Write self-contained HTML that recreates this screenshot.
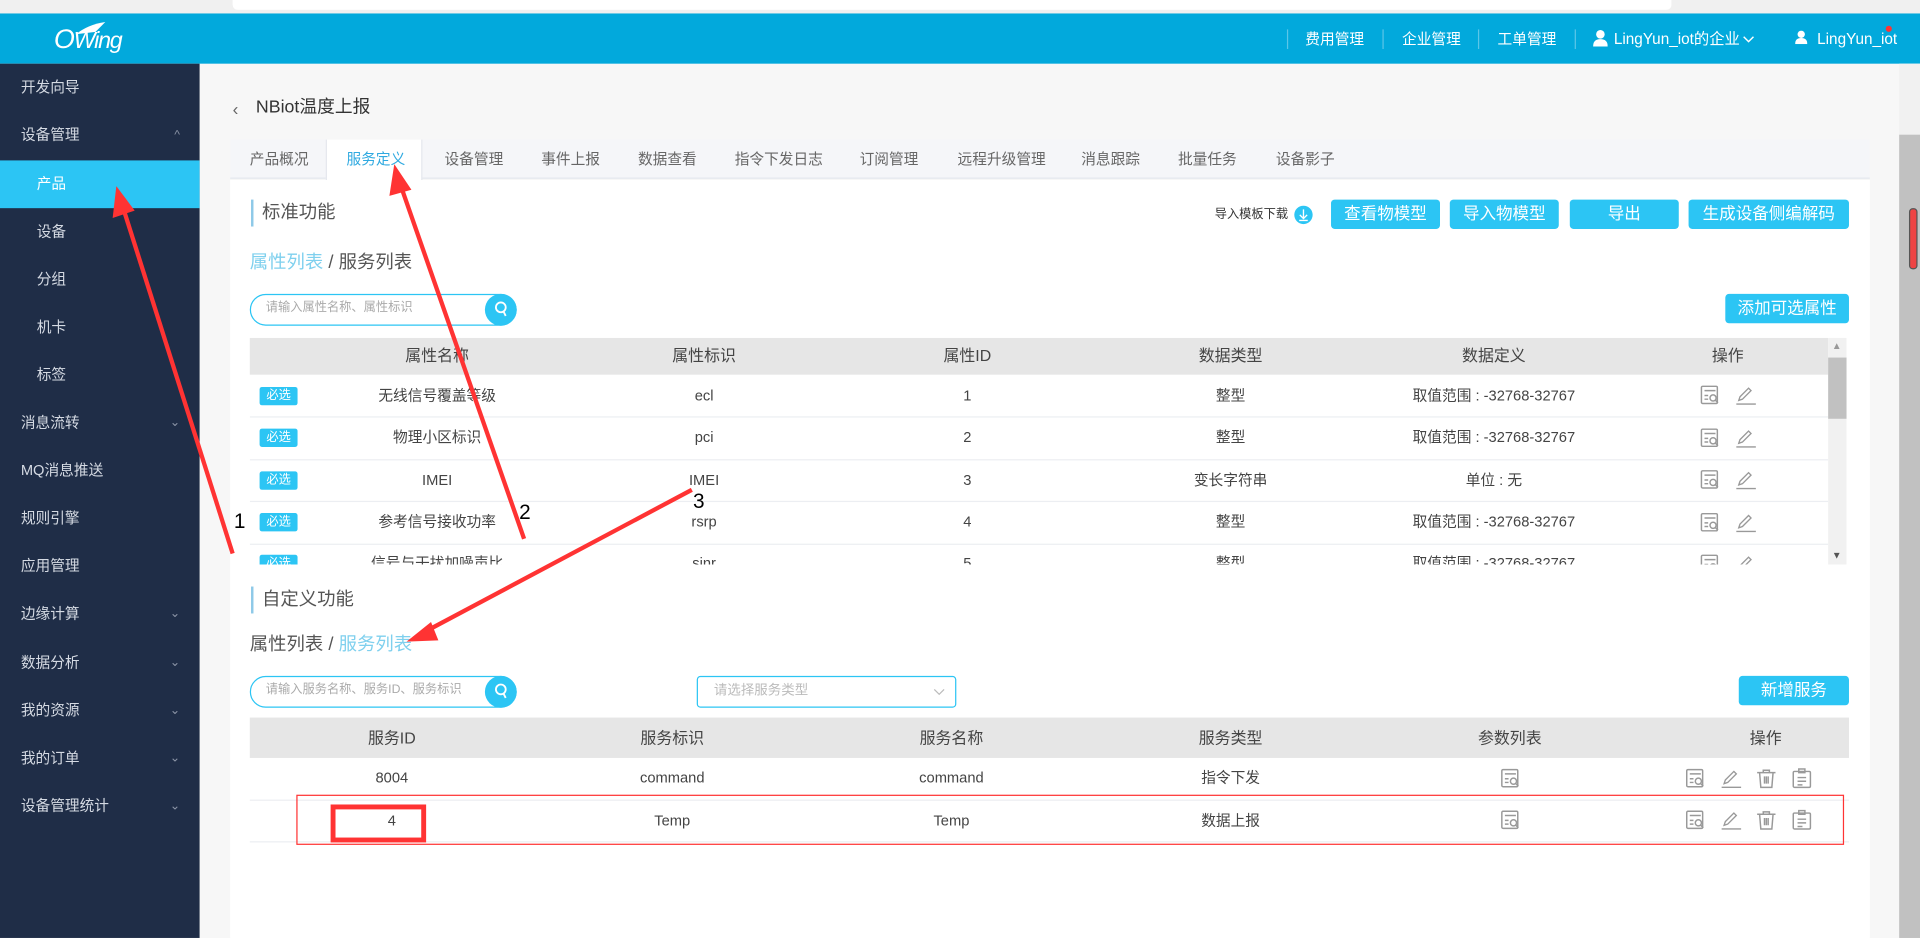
<!DOCTYPE html>
<html><head><meta charset="utf-8"><style>
*{margin:0;padding:0;box-sizing:border-box}
html,body{width:1920px;height:938px;overflow:hidden;background:#f7f7f7}
#w{position:absolute;left:0;top:0;width:1568px;height:766px;transform:scale(1.22449);transform-origin:0 0;font-family:"Liberation Sans","Noto Sans CJK SC",sans-serif;color:#333;font-size:12px;line-height:1.2}
.a{position:absolute}
.side div.it{position:absolute;left:0;width:163px;height:39px;line-height:39px;color:#d5dae3;font-size:12px;padding-left:17px}
.side div.sub{padding-left:30px}
.chev{position:absolute;right:16px;top:0;color:#8a93a5;font-size:10px}
.tab{position:absolute;top:114px;height:32px;line-height:32px;color:#666;font-size:12px}
.btn{position:absolute;background:#2cc5f4;color:#fff;border-radius:3px;text-align:center;font-size:13.5px;line-height:24px;height:24px}
.th{position:absolute;background:#e6e6e6}
.c{position:absolute;text-align:center;transform:translateX(-50%);white-space:nowrap;font-size:12px;color:#444;line-height:15px}
.row{position:absolute;left:204px;height:1px;background:#eceef2}
.badge{position:absolute;left:212px;width:31px;height:15px;background:#2cc5f4;color:#fff;border-radius:2px;font-size:10px;text-align:center;line-height:15px}
svg.ic{position:absolute;width:17px;height:17px}
</style></head><body><div id="w">
<div class="a" style="left:0;top:0;width:1568px;height:11px;background:#f0f0f0"></div>
<div class="a" style="left:190px;top:0;width:1175px;height:8px;background:#fff;border-radius:0 0 4px 4px"></div>
<div class="a" style="left:0;top:11px;width:1568px;height:41px;background:#02a9dc"></div>
<div class="a" style="left:44px;top:19px;color:#fff;font-size:22px;font-style:italic;letter-spacing:-1px">O<span style="font-size:19px">Wing</span></div>
<svg class="a" style="left:60px;top:16px" width="28" height="16"><path d="M2 12 Q12 4 26 2 L18 10 Z" fill="#fff"/></svg>
<div class="a" style="left:1051px;top:24px;width:1px;height:16px;background:#5cc6e8"></div>
<div class="a" style="left:1066px;top:25px;color:#fff;font-size:12px">费用管理</div>
<div class="a" style="left:1129px;top:24px;width:1px;height:16px;background:#5cc6e8"></div>
<div class="a" style="left:1145px;top:25px;color:#fff;font-size:12px">企业管理</div>
<div class="a" style="left:1207px;top:24px;width:1px;height:16px;background:#5cc6e8"></div>
<div class="a" style="left:1223px;top:25px;color:#fff;font-size:12px">工单管理</div>
<div class="a" style="left:1286px;top:24px;width:1px;height:16px;background:#5cc6e8"></div>
<svg class="a" style="left:1301px;top:24px" width="12" height="14"><circle cx="6" cy="4" r="3.5" fill="#fff"/><path d="M0 14 Q0 8 6 8 Q12 8 12 14Z" fill="#fff"/></svg>
<div class="a" style="left:1318px;top:25px;color:#fff;font-size:12.5px">LingYun_iot的企业</div>
<svg class="a" style="left:1423px;top:29px" width="10" height="7"><path d="M1 1l4 4 4-4" fill="none" stroke="#fff" stroke-width="1.2"/></svg>
<svg class="a" style="left:1466px;top:25px" width="10" height="11"><circle cx="5" cy="3" r="3" fill="#fff"/><path d="M0 11 Q0 6 5 6 Q10 6 10 11Z" fill="#fff"/></svg>
<div class="a" style="left:1484px;top:25px;color:#fff;font-size:12.5px">LingYun_iot</div>
<div class="a" style="left:1540px;top:21px;width:5px;height:5px;border-radius:50%;background:#f33"></div>

<div class="a side" style="left:0;top:52px;width:163px;height:714px;background:#1f2d47">
<div class="it" style="top:0">开发向导</div>
<div class="it" style="top:39px">设备管理<span class="chev">^</span></div>
<div class="it sub" style="top:79px;background:#2cc5f4;color:#fff">产品</div>
<div class="it sub" style="top:118px">设备</div>
<div class="it sub" style="top:157px">分组</div>
<div class="it sub" style="top:196px">机卡</div>
<div class="it sub" style="top:235px">标签</div>
<div class="it" style="top:274px">消息流转<span class="chev">&#8964;</span></div>
<div class="it" style="top:313px">MQ消息推送</div>
<div class="it" style="top:352px">规则引擎</div>
<div class="it" style="top:391px">应用管理</div>
<div class="it" style="top:430px">边缘计算<span class="chev">&#8964;</span></div>
<div class="it" style="top:470px">数据分析<span class="chev">&#8964;</span></div>
<div class="it" style="top:509px">我的资源<span class="chev">&#8964;</span></div>
<div class="it" style="top:548px">我的订单<span class="chev">&#8964;</span></div>
<div class="it" style="top:587px">设备管理统计<span class="chev">&#8964;</span></div>
</div>

<div class="a" style="left:1551px;top:52px;width:17px;height:714px;background:#f1f1f1"></div>
<div class="a" style="left:1551px;top:110px;width:17px;height:656px;background:#c1c1c1"></div>
<div class="a" style="left:1559px;top:170px;width:7px;height:50px;border:1px solid #555;border-radius:3px;background:#e44"></div>

<div class="a" style="left:190px;top:81px;font-size:14px;color:#666">&lsaquo;</div>
<div class="a" style="left:209px;top:80px;font-size:14.5px;color:#333">NBiot温度上报</div>

<div class="a" style="left:188px;top:114px;width:1339px;height:32px;background:#f5f6f9;border-bottom:1px solid #e4e7ed"></div>
<div class="a" style="left:266px;top:114px;width:79px;height:33px;background:#fff;border-left:1px solid #e4e7ed;border-right:1px solid #e4e7ed"></div>
<div class="tab" style="left:204px">产品概况</div>
<div class="tab" style="left:283px;color:#2fa9e0">服务定义</div>
<div class="tab" style="left:363px">设备管理</div>
<div class="tab" style="left:442px">事件上报</div>
<div class="tab" style="left:521px">数据查看</div>
<div class="tab" style="left:600px">指令下发日志</div>
<div class="tab" style="left:702px">订阅管理</div>
<div class="tab" style="left:782px">远程升级管理</div>
<div class="tab" style="left:883px">消息跟踪</div>
<div class="tab" style="left:962px">批量任务</div>
<div class="tab" style="left:1042px">设备影子</div>

<div class="a" style="left:188px;top:147px;width:1339px;height:619px;background:#fff"></div>
<div class="a" style="left:205px;top:163px;width:2px;height:22px;background:#8ec9e8"></div>
<div class="a" style="left:214px;top:165px;font-size:15px;color:#555">标准功能</div>
<div class="a" style="left:992px;top:170px;font-size:10px;color:#333">导入模板下载</div>
<div class="a" style="left:1057px;top:168px;width:15px;height:15px;border-radius:50%;background:#2cc5f4"></div>
<svg class="a" style="left:1057px;top:168px" width="15" height="15"><path d="M7.5 3v7M4.5 7.5l3 3 3-3M4 12h7" fill="none" stroke="#fff" stroke-width="1.1"/></svg>
<div class="btn" style="left:1087px;top:163px;width:89px">查看物模型</div>
<div class="btn" style="left:1184px;top:163px;width:89px">导入物模型</div>
<div class="btn" style="left:1282px;top:163px;width:89px">导出</div>
<div class="btn" style="left:1379px;top:163px;width:131px">生成设备侧编解码</div>

<div class="a" style="left:204px;top:206px;font-size:15px;color:#555"><span style="color:#7fd0ee">属性列表</span> / 服务列表</div>
<div class="a" style="left:204px;top:240px;width:218px;height:26px;border:1px solid #2cc5f4;border-radius:13px"></div>
<div class="a" style="left:217px;top:246px;font-size:10px;color:#aaa">请输入属性名称、属性标识</div>
<div class="a" style="left:396px;top:240px;width:26px;height:26px;border-radius:50%;background:#2cc5f4"></div>
<svg class="a" style="left:402px;top:245px" width="14" height="16"><circle cx="7" cy="6" r="4" fill="none" stroke="#fff" stroke-width="1.5"/><path d="M9 9 L11 13" stroke="#fff" stroke-width="1.5"/></svg>
<div class="btn" style="left:1409px;top:240px;width:101px">添加可选属性</div>

<div class="th" style="left:204px;top:276px;width:1289px;height:30px"></div>
<div class="c" style="left:357px;top:283px;font-size:13px">属性名称</div>
<div class="c" style="left:575px;top:283px;font-size:13px">属性标识</div>
<div class="c" style="left:790px;top:283px;font-size:13px">属性ID</div>
<div class="c" style="left:1005px;top:283px;font-size:13px">数据类型</div>
<div class="c" style="left:1220px;top:283px;font-size:13px">数据定义</div>
<div class="c" style="left:1411px;top:283px;font-size:13px">操作</div>
<div class="a" style="left:1493px;top:276px;width:15px;height:185px;background:#f1f1f1"></div>
<div class="a" style="left:1493px;top:292px;width:15px;height:50px;background:#c1c1c1"></div>
<div class="a" style="left:1496px;top:278px;font-size:8px;color:#999">&#9650;</div>
<div class="a" style="left:1496px;top:449px;font-size:8px;color:#555">&#9660;</div>

<svg width="0" height="0" style="position:absolute"><defs>
<g id="q" fill="none" stroke="#999" stroke-width="1.2"><rect x="1.5" y="1.5" width="13" height="14" rx="1"/><path d="M4 5h9M4 9h3M4 12h3"/><circle cx="11" cy="11" r="2.5"/><path d="M13 13l2 2"/></g>
<g id="e" fill="none" stroke="#999" stroke-width="1.1"><path d="M3 13l1-3 7-7 2 2-7 7z"/><path d="M1 16h16"/></g>
<g id="d" fill="none" stroke="#999" stroke-width="1.2"><path d="M1 4h15M6 4V2h5v2M3 4l1 12h9l1-12M7 7v6M8.5 7v6M10 7v6"/></g>
<g id="c" fill="none" stroke="#999" stroke-width="1.2"><rect x="1.5" y="3" width="14" height="13" rx="1"/><rect x="6" y="1" width="5" height="3"/><path d="M5 8h7M5 11h7M5 14h4"/></g>
</defs></svg>

<div class="a" style="left:204px;top:306px;width:1289px;height:155px;overflow:hidden">
<div style="position:relative;left:-204px;top:-306px">
<div class="badge" style="top:316px">必选</div><div class="c" style="left:357px;top:316px">无线信号覆盖等级</div><div class="c" style="left:575px;top:316px">ecl</div><div class="c" style="left:790px;top:316px">1</div><div class="c" style="left:1005px;top:316px">整型</div><div class="c" style="left:1220px;top:316px">取值范围 : -32768-32767</div>
<div class="row" style="top:340px;width:1289px"></div>
<div class="badge" style="top:350px">必选</div><div class="c" style="left:357px;top:350px">物理小区标识</div><div class="c" style="left:575px;top:350px">pci</div><div class="c" style="left:790px;top:350px">2</div><div class="c" style="left:1005px;top:350px">整型</div><div class="c" style="left:1220px;top:350px">取值范围 : -32768-32767</div>
<div class="row" style="top:375px;width:1289px"></div>
<div class="badge" style="top:385px">必选</div><div class="c" style="left:357px;top:385px">IMEI</div><div class="c" style="left:575px;top:385px">IMEI</div><div class="c" style="left:790px;top:385px">3</div><div class="c" style="left:1005px;top:385px">变长字符串</div><div class="c" style="left:1220px;top:385px">单位 : 无</div>
<div class="row" style="top:409px;width:1289px"></div>
<div class="badge" style="top:419px">必选</div><div class="c" style="left:357px;top:419px">参考信号接收功率</div><div class="c" style="left:575px;top:419px">rsrp</div><div class="c" style="left:790px;top:419px">4</div><div class="c" style="left:1005px;top:419px">整型</div><div class="c" style="left:1220px;top:419px">取值范围 : -32768-32767</div>
<div class="row" style="top:444px;width:1289px"></div>
<div class="badge" style="top:453px">必选</div><div class="c" style="left:357px;top:453px">信号与干扰加噪声比</div><div class="c" style="left:575px;top:453px">sinr</div><div class="c" style="left:790px;top:453px">5</div><div class="c" style="left:1005px;top:453px">整型</div><div class="c" style="left:1220px;top:453px">取值范围 : -32768-32767</div>
<svg class="ic" style="left:1388px;top:314px" viewBox="0 0 17 17"><use href="#q"/></svg>
<svg class="ic" style="left:1417px;top:314px" viewBox="0 0 17 17"><use href="#e"/></svg>
<svg class="ic" style="left:1388px;top:349px" viewBox="0 0 17 17"><use href="#q"/></svg>
<svg class="ic" style="left:1417px;top:349px" viewBox="0 0 17 17"><use href="#e"/></svg>
<svg class="ic" style="left:1388px;top:383px" viewBox="0 0 17 17"><use href="#q"/></svg>
<svg class="ic" style="left:1417px;top:383px" viewBox="0 0 17 17"><use href="#e"/></svg>
<svg class="ic" style="left:1388px;top:418px" viewBox="0 0 17 17"><use href="#q"/></svg>
<svg class="ic" style="left:1417px;top:418px" viewBox="0 0 17 17"><use href="#e"/></svg>
<svg class="ic" style="left:1388px;top:452px" viewBox="0 0 17 17"><use href="#q"/></svg>
<svg class="ic" style="left:1417px;top:452px" viewBox="0 0 17 17"><use href="#e"/></svg>
</div></div>

<div class="a" style="left:205px;top:479px;width:2px;height:22px;background:#8ec9e8"></div>
<div class="a" style="left:214px;top:481px;font-size:15px;color:#555">自定义功能</div>
<div class="a" style="left:204px;top:518px;font-size:15px;color:#555">属性列表 / <span style="color:#7fd0ee">服务列表</span></div>
<div class="a" style="left:204px;top:552px;width:218px;height:26px;border:1px solid #2cc5f4;border-radius:13px"></div>
<div class="a" style="left:217px;top:558px;font-size:10px;color:#aaa">请输入服务名称、服务ID、服务标识</div>
<div class="a" style="left:396px;top:552px;width:26px;height:26px;border-radius:50%;background:#2cc5f4"></div>
<svg class="a" style="left:402px;top:557px" width="14" height="16"><circle cx="7" cy="6" r="4" fill="none" stroke="#fff" stroke-width="1.5"/><path d="M9 9 L11 13" stroke="#fff" stroke-width="1.5"/></svg>
<div class="a" style="left:569px;top:552px;width:212px;height:26px;border:1px solid #2cc5f4;border-radius:3px"></div>
<div class="a" style="left:583px;top:558px;font-size:11px;color:#bbb">请选择服务类型</div>
<svg class="a" style="left:762px;top:562px" width="10" height="7"><path d="M1 1l4 4 4-4" fill="none" stroke="#bbb" stroke-width="1"/></svg>
<div class="btn" style="left:1420px;top:552px;width:90px">新增服务</div>

<div class="th" style="left:204px;top:586px;width:1306px;height:33px"></div>
<div class="c" style="left:320px;top:595px;font-size:13px">服务ID</div>
<div class="c" style="left:549px;top:595px;font-size:13px">服务标识</div>
<div class="c" style="left:777px;top:595px;font-size:13px">服务名称</div>
<div class="c" style="left:1005px;top:595px;font-size:13px">服务类型</div>
<div class="c" style="left:1233px;top:595px;font-size:13px">参数列表</div>
<div class="c" style="left:1442px;top:595px;font-size:13px">操作</div>
<div class="c" style="left:320px;top:628px">8004</div><div class="c" style="left:549px;top:628px">command</div><div class="c" style="left:777px;top:628px">command</div><div class="c" style="left:1005px;top:628px">指令下发</div>
<div class="row" style="top:653px;width:1306px"></div>
<div class="c" style="left:320px;top:663px">4</div><div class="c" style="left:549px;top:663px">Temp</div><div class="c" style="left:777px;top:663px">Temp</div><div class="c" style="left:1005px;top:663px">数据上报</div>
<div class="row" style="top:687px;width:1306px"></div>

<svg class="ic" style="left:1225px;top:627px" viewBox="0 0 17 17"><use href="#q"/></svg>
<svg class="ic" style="left:1376px;top:627px" viewBox="0 0 17 17"><use href="#q"/></svg>
<svg class="ic" style="left:1405px;top:627px" viewBox="0 0 17 17"><use href="#e"/></svg>
<svg class="ic" style="left:1434px;top:627px" viewBox="0 0 17 17"><use href="#d"/></svg>
<svg class="ic" style="left:1463px;top:627px" viewBox="0 0 17 17"><use href="#c"/></svg>
<svg class="ic" style="left:1225px;top:661px" viewBox="0 0 17 17"><use href="#q"/></svg>
<svg class="ic" style="left:1376px;top:661px" viewBox="0 0 17 17"><use href="#q"/></svg>
<svg class="ic" style="left:1405px;top:661px" viewBox="0 0 17 17"><use href="#e"/></svg>
<svg class="ic" style="left:1434px;top:661px" viewBox="0 0 17 17"><use href="#d"/></svg>
<svg class="ic" style="left:1463px;top:661px" viewBox="0 0 17 17"><use href="#c"/></svg>

<div class="a" style="left:242px;top:649px;width:1264px;height:41px;border:1px solid #f33"></div>
<div class="a" style="left:270px;top:657px;width:78px;height:31px;border:4px solid #f33"></div>

<svg class="a" style="left:0;top:0" width="1568" height="766">
<g stroke="#f33" fill="#f33">
<line x1="190" y1="452" x2="100" y2="168" stroke-width="3.5"/>
<polygon points="95,152 92,178 110,172" stroke="none"/>
<line x1="428" y1="440" x2="326" y2="148" stroke-width="3.5"/>
<polygon points="322,134 318,160 336,155" stroke="none"/>
<line x1="565" y1="400" x2="345" y2="517" stroke-width="3.5"/>
<polygon points="332,524 352,508 358,523" stroke="none"/>
</g>
<text x="191" y="431" font-size="17" font-family="Liberation Sans" fill="#000">1</text>
<text x="424" y="424" font-size="17" font-family="Liberation Sans" fill="#000">2</text>
<text x="566" y="415" font-size="17" font-family="Liberation Sans" fill="#000">3</text>
</svg>
</div></body></html>
